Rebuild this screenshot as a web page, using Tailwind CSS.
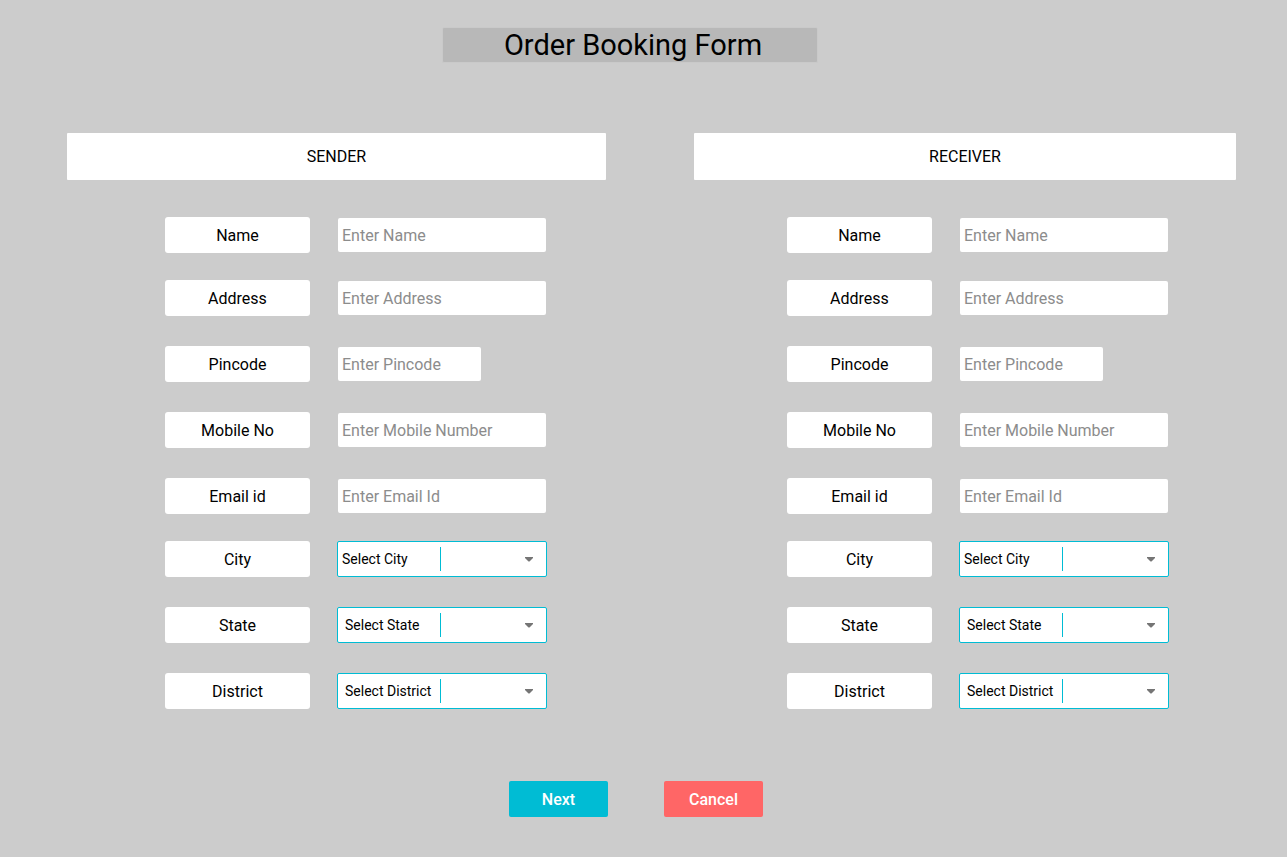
<!DOCTYPE html>
<html lang="en">
<head>
<meta charset="utf-8">
<meta name="viewport" content="width=device-width, initial-scale=1">
<title>Order Booking Form</title>
<script src="https://cdn.jsdelivr.net/npm/@tailwindcss/browser@4"></script>
</head>
<body class="min-h-screen bg-[#cccccc] font-['Roboto',sans-serif] text-base text-black">
<main class="flex flex-col pt-[27px] pb-10">
  <header class="flex justify-center pr-[27px]">
    <h1 class="flex h-9 w-[376px] items-center justify-center rounded-[2px] border border-[#c9c9c9] bg-[#b8b8b8] pl-1.5 text-[29px] leading-8">Order Booking Form</h1>
  </header>

  <form>
    <div class="mt-[69px] grid grid-cols-[541fr_544fr] gap-[86px] pr-[50px] pl-[66px]">
      <section aria-labelledby="s-title">
        <h2 id="s-title" class="flex h-[49px] items-center justify-center rounded-[2px] border border-black/20 bg-white">SENDER</h2>
        <div class="mt-9 flex flex-col gap-[27px] pl-[99px]">
          <div class="flex gap-[27px]">
            <label for="s-name" class="flex h-9 w-[145px] items-center justify-center rounded-[3px] bg-white pt-0.5">Name</label>
            <input id="s-name" type="text" placeholder="Enter Name" class="h-9 w-[210px] rounded-[3px] border border-black/20 bg-white px-1 placeholder:text-[#8c8c8c]">
          </div>
          <div class="flex flex-col gap-[30px]">
            <div class="flex gap-[27px]">
              <label for="s-address" class="flex h-9 w-[145px] items-center justify-center rounded-[3px] bg-white pt-0.5">Address</label>
              <input id="s-address" type="text" placeholder="Enter Address" class="h-9 w-[210px] rounded-[3px] border border-black/20 bg-white px-1 placeholder:text-[#8c8c8c]">
            </div>
            <div class="flex gap-[27px]">
              <label for="s-pincode" class="flex h-9 w-[145px] items-center justify-center rounded-[3px] bg-white pt-0.5">Pincode</label>
              <input id="s-pincode" type="text" placeholder="Enter Pincode" class="h-9 w-[145px] rounded-[3px] border border-black/20 bg-white px-1 placeholder:text-[#8c8c8c]">
            </div>
            <div class="flex gap-[27px]">
              <label for="s-mobile" class="flex h-9 w-[145px] items-center justify-center rounded-[3px] bg-white pt-0.5">Mobile No</label>
              <input id="s-mobile" type="tel" placeholder="Enter Mobile Number" class="h-9 w-[210px] rounded-[3px] border border-black/20 bg-white px-1 placeholder:text-[#8c8c8c]">
            </div>
            <div class="flex gap-[27px]">
              <label for="s-email" class="flex h-9 w-[145px] items-center justify-center rounded-[3px] bg-white pt-0.5">Email id</label>
              <input id="s-email" type="email" placeholder="Enter Email Id" class="h-9 w-[210px] rounded-[3px] border border-black/20 bg-white px-1 placeholder:text-[#8c8c8c]">
            </div>
          </div>
          <div class="flex flex-col gap-[30px]">
            <div class="flex gap-[27px]">
              <label for="s-city" class="flex h-9 w-[145px] items-center justify-center rounded-[3px] bg-white pt-0.5">City</label>
              <div class="relative w-[210px]">
                <select id="s-city" class="h-9 w-full appearance-none rounded-[2px] border border-[#00bcd4] bg-white pl-1 text-sm"><option>Select City</option></select>
                <span class="pointer-events-none absolute inset-y-1.5 left-[103px] w-px bg-[#00bcd4]"></span>
                <svg class="pointer-events-none absolute top-4 right-3.5" width="8" height="5" viewBox="0 0 8 5" aria-hidden="true"><path d="M0 0h8v1L4.500 4.500h-1L0 1z" fill="#757575"/></svg>
              </div>
            </div>
            <div class="flex gap-[27px]">
              <label for="s-state" class="flex h-9 w-[145px] items-center justify-center rounded-[3px] bg-white pt-0.5">State</label>
              <div class="relative w-[210px]">
                <select id="s-state" class="h-9 w-full appearance-none rounded-[2px] border border-[#00bcd4] bg-white pl-[7px] text-sm"><option>Select State</option></select>
                <span class="pointer-events-none absolute inset-y-1.5 left-[103px] w-px bg-[#00bcd4]"></span>
                <svg class="pointer-events-none absolute top-4 right-3.5" width="8" height="5" viewBox="0 0 8 5" aria-hidden="true"><path d="M0 0h8v1L4.500 4.500h-1L0 1z" fill="#757575"/></svg>
              </div>
            </div>
            <div class="flex gap-[27px]">
              <label for="s-district" class="flex h-9 w-[145px] items-center justify-center rounded-[3px] bg-white pt-0.5">District</label>
              <div class="relative w-[210px]">
                <select id="s-district" class="h-9 w-full appearance-none rounded-[2px] border border-[#00bcd4] bg-white pl-[7px] text-sm"><option>Select District</option></select>
                <span class="pointer-events-none absolute inset-y-1.5 left-[103px] w-px bg-[#00bcd4]"></span>
                <svg class="pointer-events-none absolute top-4 right-3.5" width="8" height="5" viewBox="0 0 8 5" aria-hidden="true"><path d="M0 0h8v1L4.500 4.500h-1L0 1z" fill="#757575"/></svg>
              </div>
            </div>
          </div>
        </div>
      </section>

      <section aria-labelledby="r-title">
        <h2 id="r-title" class="flex h-[49px] items-center justify-center rounded-[2px] border border-black/20 bg-white">RECEIVER</h2>
        <div class="mt-9 flex flex-col gap-[27px] pl-[94px]">
          <div class="flex gap-[27px]">
            <label for="r-name" class="flex h-9 w-[145px] items-center justify-center rounded-[3px] bg-white pt-0.5">Name</label>
            <input id="r-name" type="text" placeholder="Enter Name" class="h-9 w-[210px] rounded-[3px] border border-black/20 bg-white px-1 placeholder:text-[#8c8c8c]">
          </div>
          <div class="flex flex-col gap-[30px]">
            <div class="flex gap-[27px]">
              <label for="r-address" class="flex h-9 w-[145px] items-center justify-center rounded-[3px] bg-white pt-0.5">Address</label>
              <input id="r-address" type="text" placeholder="Enter Address" class="h-9 w-[210px] rounded-[3px] border border-black/20 bg-white px-1 placeholder:text-[#8c8c8c]">
            </div>
            <div class="flex gap-[27px]">
              <label for="r-pincode" class="flex h-9 w-[145px] items-center justify-center rounded-[3px] bg-white pt-0.5">Pincode</label>
              <input id="r-pincode" type="text" placeholder="Enter Pincode" class="h-9 w-[145px] rounded-[3px] border border-black/20 bg-white px-1 placeholder:text-[#8c8c8c]">
            </div>
            <div class="flex gap-[27px]">
              <label for="r-mobile" class="flex h-9 w-[145px] items-center justify-center rounded-[3px] bg-white pt-0.5">Mobile No</label>
              <input id="r-mobile" type="tel" placeholder="Enter Mobile Number" class="h-9 w-[210px] rounded-[3px] border border-black/20 bg-white px-1 placeholder:text-[#8c8c8c]">
            </div>
            <div class="flex gap-[27px]">
              <label for="r-email" class="flex h-9 w-[145px] items-center justify-center rounded-[3px] bg-white pt-0.5">Email id</label>
              <input id="r-email" type="email" placeholder="Enter Email Id" class="h-9 w-[210px] rounded-[3px] border border-black/20 bg-white px-1 placeholder:text-[#8c8c8c]">
            </div>
          </div>
          <div class="flex flex-col gap-[30px]">
            <div class="flex gap-[27px]">
              <label for="r-city" class="flex h-9 w-[145px] items-center justify-center rounded-[3px] bg-white pt-0.5">City</label>
              <div class="relative w-[210px]">
                <select id="r-city" class="h-9 w-full appearance-none rounded-[2px] border border-[#00bcd4] bg-white pl-1 text-sm"><option>Select City</option></select>
                <span class="pointer-events-none absolute inset-y-1.5 left-[103px] w-px bg-[#00bcd4]"></span>
                <svg class="pointer-events-none absolute top-4 right-3.5" width="8" height="5" viewBox="0 0 8 5" aria-hidden="true"><path d="M0 0h8v1L4.500 4.500h-1L0 1z" fill="#757575"/></svg>
              </div>
            </div>
            <div class="flex gap-[27px]">
              <label for="r-state" class="flex h-9 w-[145px] items-center justify-center rounded-[3px] bg-white pt-0.5">State</label>
              <div class="relative w-[210px]">
                <select id="r-state" class="h-9 w-full appearance-none rounded-[2px] border border-[#00bcd4] bg-white pl-[7px] text-sm"><option>Select State</option></select>
                <span class="pointer-events-none absolute inset-y-1.5 left-[103px] w-px bg-[#00bcd4]"></span>
                <svg class="pointer-events-none absolute top-4 right-3.5" width="8" height="5" viewBox="0 0 8 5" aria-hidden="true"><path d="M0 0h8v1L4.500 4.500h-1L0 1z" fill="#757575"/></svg>
              </div>
            </div>
            <div class="flex gap-[27px]">
              <label for="r-district" class="flex h-9 w-[145px] items-center justify-center rounded-[3px] bg-white pt-0.5">District</label>
              <div class="relative w-[210px]">
                <select id="r-district" class="h-9 w-full appearance-none rounded-[2px] border border-[#00bcd4] bg-white pl-[7px] text-sm"><option>Select District</option></select>
                <span class="pointer-events-none absolute inset-y-1.5 left-[103px] w-px bg-[#00bcd4]"></span>
                <svg class="pointer-events-none absolute top-4 right-3.5" width="8" height="5" viewBox="0 0 8 5" aria-hidden="true"><path d="M0 0h8v1L4.500 4.500h-1L0 1z" fill="#757575"/></svg>
              </div>
            </div>
          </div>
        </div>
      </section>
    </div>

    <div class="mt-[72px] flex justify-center gap-14 pr-[15px] font-medium text-white">
      <button type="submit" class="h-9 w-[99px] rounded-[2px] bg-[#00bcd4] pt-0.5">Next</button>
      <button type="button" class="h-9 w-[99px] rounded-[2px] bg-[#ff6666] pt-0.5">Cancel</button>
    </div>
  </form>
</main>
</body>
</html>
